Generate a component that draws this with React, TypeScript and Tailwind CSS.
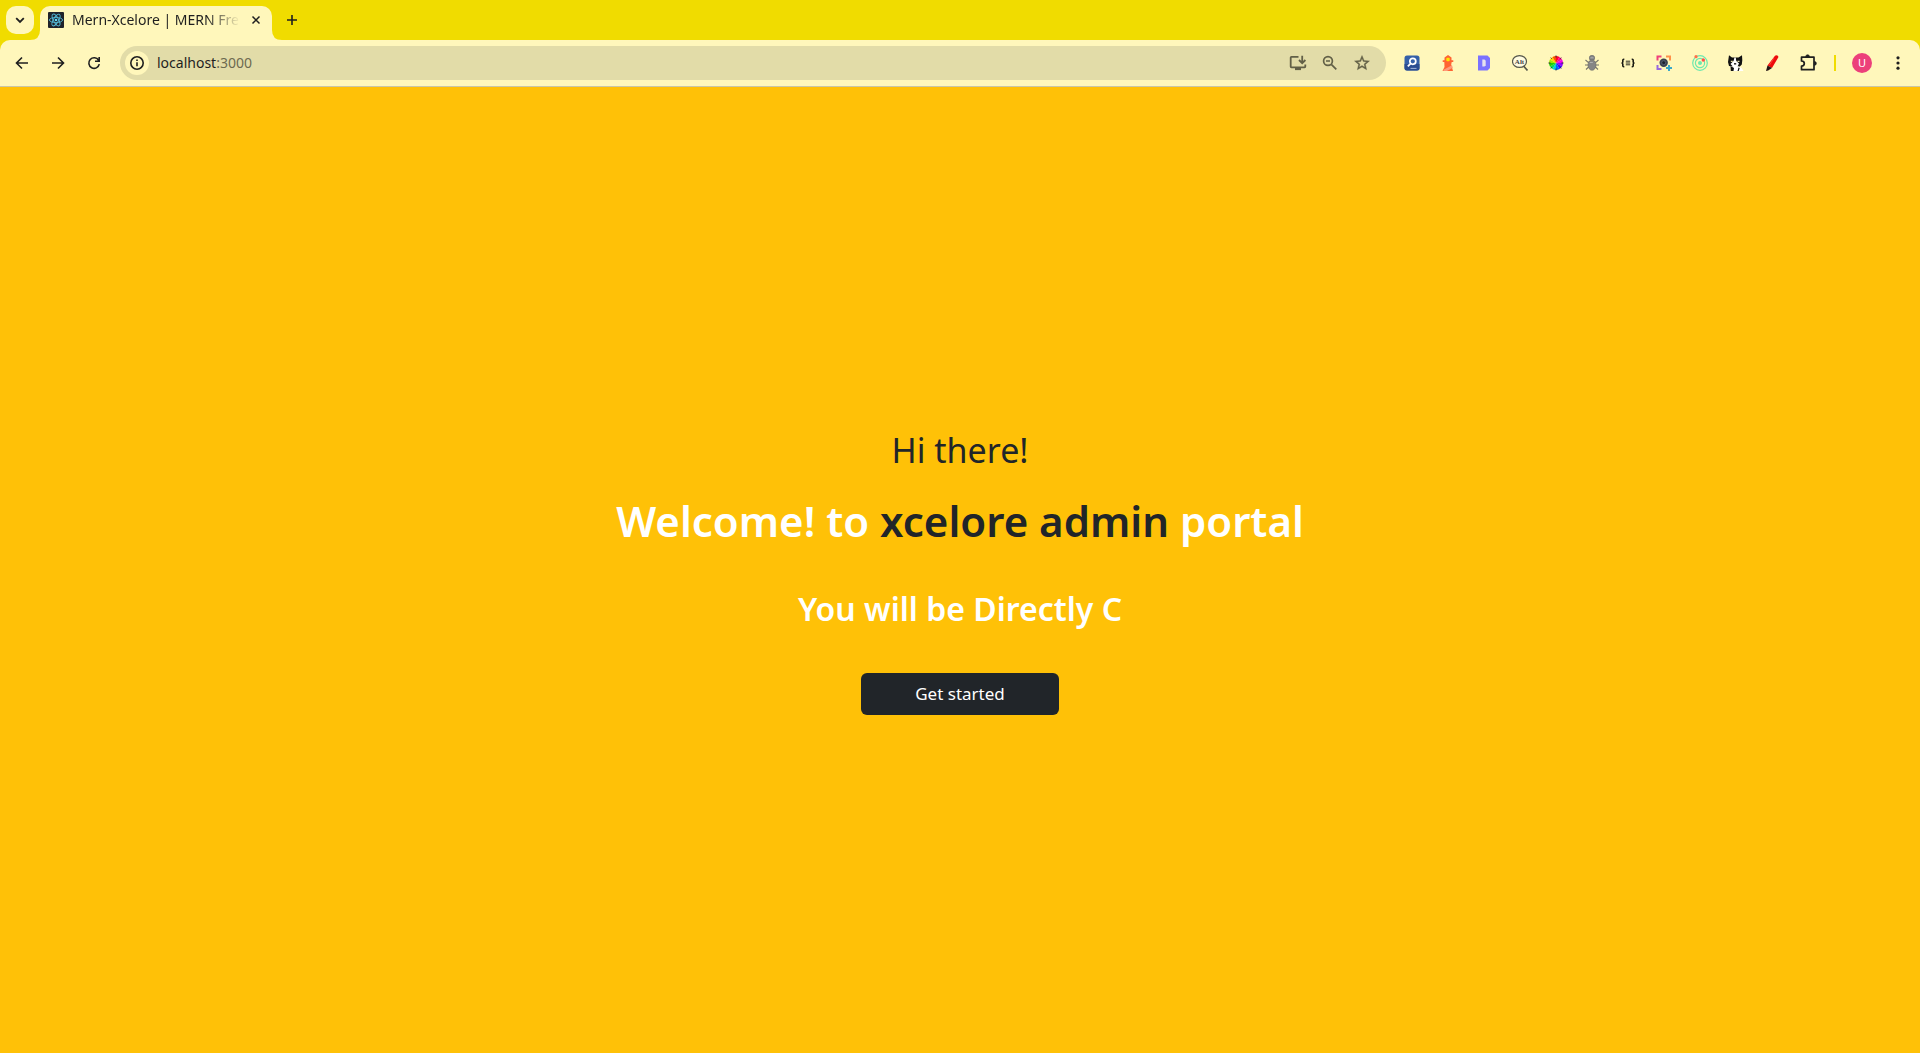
import type { ReactNode } from "react";

function IconButton({ label, children }: { label: string; children: ReactNode }) {
  return (
    <button type="button" aria-label={label} className="flex h-7 w-7 shrink-0 items-center justify-center rounded-full">
      {children}
    </button>
  );
}

function Stroke({ d, size = 16, width = 2 }: { d: string; size?: number; width?: number }) {
  return (
    <svg width={size} height={size} viewBox="0 0 16 16" fill="none" stroke="currentColor" strokeWidth={width}>
      <path d={d} />
    </svg>
  );
}

function ReactFavicon() {
  return (
    <svg className="shrink-0" width="16" height="16" viewBox="0 0 16 16">
      <rect width="16" height="16" rx="1" fill="#20232a" />
      <g fill="none" stroke="#53b9d6" strokeWidth="0.9">
        <ellipse cx="8" cy="8" rx="6.6" ry="2.6" />
        <ellipse cx="8" cy="8" rx="6.6" ry="2.6" transform="rotate(60 8 8)" />
        <ellipse cx="8" cy="8" rx="6.6" ry="2.6" transform="rotate(120 8 8)" />
      </g>
      <circle cx="8" cy="8" r="1.3" fill="#61dafb" />
    </svg>
  );
}

function InstallIcon() {
  return (
    <svg width="18" height="16" viewBox="0 0 18 16" fill="none" stroke="currentColor" strokeWidth="1.8">
      <path d="M9.5 1.9H2.4q-.7 0-.7.7v9q0 .7.7.7h13.2q.7 0 .7-.7V9.5" />
      <path d="M6 13.9h6" strokeWidth="2.4" />
      <path d="M13.2.8v7M10 5l3.2 3.2L16.4 5" />
    </svg>
  );
}

function ZoomOutIcon() {
  return (
    <svg width="16" height="16" viewBox="0 0 16 16" fill="none" stroke="currentColor" strokeWidth="1.7">
      <circle cx="6" cy="6" r="4.4" />
      <path d="M4 6h4M9.3 9.3l5 5" />
    </svg>
  );
}

function StarIcon() {
  return (
    <svg width="18" height="18" viewBox="0 0 24 24" fill="currentColor" stroke="currentColor" strokeWidth="0.5">
      <path d="m22 9.24-7.19-.62L12 2 9.19 8.63 2 9.24l5.46 4.73L5.82 21 12 17.27 18.18 21l-1.63-7.03zM12 15.4l-3.76 2.27 1-4.28-3.32-2.88 4.38-.38L12 6.1l1.71 4.04 4.38.38-3.32 2.88 1 4.28z" />
    </svg>
  );
}

function SearchTile() {
  return (
    <svg width="16" height="16" viewBox="0 0 16 16">
      <rect x="0.5" y="0.5" width="15" height="15" rx="2.5" fill="#3560a8" />
      <path d="M.5 9v4q0 2.5 2.5 2.5h10q2.5 0 2.5-2.5V9z" fill="#2a4c90" />
      <circle cx="8.8" cy="6.3" r="3" fill="none" stroke="#fff" strokeWidth="1.7" />
      <path d="M6.6 8.6 3.8 11.3" stroke="#fff" strokeWidth="1.8" />
      <path d="M6.5 13.4h6" stroke="#9fb2d8" strokeWidth="1" />
    </svg>
  );
}

function Lighthouse() {
  return (
    <svg width="16" height="16" viewBox="0 0 16 16">
      <path d="M8 0 11.5 2.5v2.7h1.8V7h-1.6L11.200 9.5l1.800 6.500H2.5l2-4-.2-5H2.700V5.200h1.800V2.500z" fill="#ff6433" />
      <rect x="6.3" y="2.8" width="3.4" height="3.4" rx="1" fill="#ffe500" />
      <path d="m4 14.500 8-4.300.8 2.600L7 16H3.300z" fill="#ff9a7a" />
    </svg>
  );
}

function DIcon() {
  return (
    <svg width="16" height="16" viewBox="0 0 16 16">
      <path d="M2 .5h9.5L14 3v10l-2.5 2.5H2z" fill="#7b72ff" />
      <path d="M6.3 4.500h2.200l1.200 1.200v4.600l-1.200 1.200H6.300z" fill="#e6e1ee" />
    </svg>
  );
}

function AltIcon() {
  return (
    <svg width="16" height="16" viewBox="0 0 16 16">
      <ellipse cx="7.5" cy="6.5" rx="7" ry="5.9" fill="#fffbe0" stroke="#55564a" strokeWidth="1.2" />
      <path d="m11.5 11 4 4.5" stroke="#55564a" strokeWidth="1.7" />
      <text x="7.5" y="9" textAnchor="middle" fontSize="7" fontFamily="Liberation Serif" fontWeight="700" fill="#444">
        Alt
      </text>
    </svg>
  );
}

const wheelColors = [
  "#ff0030",
  "#ff0098",
  "#f000f0",
  "#9000ff",
  "#3000ff",
  "#0060ff",
  "#00c8e8",
  "#00d860",
  "#20d000",
  "#a0e800",
  "#ffd000",
  "#ff5000",
];

function wheelPoint(i: number) {
  const a = (i * Math.PI) / 6 - Math.PI / 2;
  return `${8 + 7 * Math.cos(a)} ${8 + 7 * Math.sin(a)}`;
}

function ColorWheel() {
  return (
    <svg width="16" height="16" viewBox="0 0 16 16">
      {wheelColors.map((fill, i) => (
        <path key={fill} d={`M8 8 ${wheelPoint(i)}A7 7 0 0 1 ${wheelPoint(i + 1)}z`} fill={fill} />
      ))}
      <path d="M8 .5v2M8 13.5v2M.5 8h2M13.5 8h2M2.700 2.700l1 1M13.300 2.700l-1 1M2.700 13.300l1-1M13.300 13.300l-1-1" stroke="#333" strokeWidth="1" />
    </svg>
  );
}

function BugIcon() {
  return (
    <svg width="16" height="16" viewBox="0 0 16 16">
      <path d="M1.500 5 4 7.200h8L14.500 5M1 10h14M2 14.500 4.500 12h7l2.500 2.500" fill="none" stroke="#77756a" strokeWidth="1.1" />
      <circle cx="8" cy="3" r="2.7" fill="#858585" stroke="#686868" strokeWidth="0.6" />
      <ellipse cx="8" cy="10" rx="4" ry="5.3" fill="#858585" stroke="#686868" strokeWidth="0.6" />
      <path d="M6.500 2.800h3M5.800 7.500h3" stroke="#b0b0b0" strokeWidth="1" />
    </svg>
  );
}

function BracesIcon() {
  return (
    <svg width="16" height="16" viewBox="0 0 16 16" fill="none" stroke="#1b1b12" strokeWidth="1.6">
      <path d="M4.300 4.300h-.5q-1 0-1 1V7q0 1-1.300 1 1.300 0 1.300 1v1.700q0 1 1 1h.5M11.700 4.300h.5q1 0 1 1V7q0 1 1.300 1-1.300 0-1.300 1v1.700q0 1-1 1h-.5" />
      <path d="M5.800 6.200h4.400M5.800 8h4.400M5.800 9.800h4.400" strokeWidth="0.9" />
    </svg>
  );
}

function CaptureIcon() {
  return (
    <svg width="16" height="16" viewBox="0 0 16 16" fill="none" strokeWidth="2">
      <path d="M1.500 5.500v-4h4" stroke="#f0407a" />
      <path d="M10 1.500h4v4" stroke="#ff9048" />
      <path d="M1.500 10v4h4" stroke="#9868e0" />
      <path d="M13 10v6M10 13h6" stroke="#3aa8c8" />
      <circle cx="7.7" cy="7.7" r="4.2" fill="#394150" />
      <circle cx="7.7" cy="7.7" r="2" fill="#1d232e" stroke="#647087" strokeWidth="0.7" />
    </svg>
  );
}

function RadarIcon() {
  return (
    <svg width="16" height="16" viewBox="0 0 16 16" fill="none" stroke="#6de8ae" strokeWidth="1.2">
      <circle cx="8" cy="8" r="7.3" />
      <circle cx="8" cy="8" r="4.6" />
      <circle cx="8" cy="8" r="2" fill="#6de8ae" stroke="none" />
      <circle cx="4" cy="1.7" r="1.6" fill="#ff7048" stroke="none" />
      <circle cx="11.3" cy="5" r="1.7" fill="#ff5048" stroke="none" />
    </svg>
  );
}

function CatIcon() {
  return (
    <svg width="16" height="16" viewBox="0 0 16 16">
      <path d="M1 .3 4 2.500h6.500L14 .3l.300 5-.5 4.200-2 2H4.500L1 11 0 7z" fill="#111" />
      <path d="M6.500 2.500h1.200L8.300 6l2.700 2.500-1.500 3H5L2.500 9l3-3zM2.500 11.500h8l3 1.500L15.500 16H3z" fill="#fff" />
      <path d="M2.500 11 6 13l-.5 3H2.800zM10.500 12.500l-1 3.500h1.200l1-3z" fill="#111" />
      <path d="M2.800 5.800h2V7h-2zM9.500 5.800h2V7h-2z" fill="#e8e5ae" />
      <path d="M6 8h2.200v1.600H6z" fill="#333" />
    </svg>
  );
}

function MarkerIcon() {
  return (
    <svg width="16" height="16" viewBox="0 0 16 16">
      <path d="M11 .8q1-1 2.300-.2 1.500.8.900 2L8 13l-4.500-2.500z" fill="#ee0b0b" />
      <path d="M3.500 10.500 8 13l-3.800 2.500-2.200.5z" fill="#251414" />
      <path d="m10 3-4.500 7" stroke="#ff4b42" strokeWidth="0.8" />
    </svg>
  );
}

function PuzzleIcon() {
  return (
    <svg width="18" height="18" viewBox="0 0 18 18" fill="none" stroke="#1f1f1f" strokeWidth="1.7" strokeLinejoin="round">
      <path d="M2.500 3.200H15v12.500H2.500V12q2.800 0 2.800-2.500T2.500 7z" />
      <path d="M6.800 3V2.300a1.800 1.600 0 0 1 3.600 0V3zM15.300 7.600h.5a1.600 1.800 0 0 1 0 3.600h-.5z" fill="#1f1f1f" strokeWidth="0.6" />
    </svg>
  );
}

const extensions: { label: string; icon: ReactNode }[] = [
  { label: "Page search", icon: <SearchTile /> },
  { label: "Lighthouse", icon: <Lighthouse /> },
  { label: "Dictionary", icon: <DIcon /> },
  { label: "Alt text viewer", icon: <AltIcon /> },
  { label: "Color picker", icon: <ColorWheel /> },
  { label: "Bug tracker", icon: <BugIcon /> },
  { label: "JSON viewer", icon: <BracesIcon /> },
  { label: "Screen capture", icon: <CaptureIcon /> },
  { label: "Radar", icon: <RadarIcon /> },
  { label: "Cat", icon: <CatIcon /> },
  { label: "Marker", icon: <MarkerIcon /> },
  { label: "Extensions", icon: <PuzzleIcon /> },
];

function TabStrip() {
  return (
    <div className="flex h-10 items-start bg-[#f0dc00] px-1.5 pt-1.5">
      <button type="button" aria-label="Search tabs" className="flex h-7 w-7 items-center justify-center rounded-[10px] bg-[#fff7bb]">
        <Stroke d="m4.200 6.200 3.800 3.800 3.800-3.800" width={1.8} />
      </button>
      <div className="relative ml-1.5 flex h-[34px] w-[232px] items-center rounded-t-[10px] bg-[#fff7bb] px-2 pb-1.5">
        <svg className="absolute -left-2.5 bottom-0" width="10" height="10" viewBox="0 0 10 10">
          <path d="M10 0v10H0Q10 10 10 0z" fill="#fff7bb" />
        </svg>
        <svg className="absolute -right-2.5 bottom-0" width="10" height="10" viewBox="0 0 10 10">
          <path d="M0 0v10h10Q0 10 0 0z" fill="#fff7bb" />
        </svg>
        <ReactFavicon />
        <span className="ml-2 min-w-0 flex-1 whitespace-nowrap text-[14px] leading-5 [mask-image:linear-gradient(to_right,black_80%,transparent)]">
          Mern-Xcelore | MERN Fre
        </span>
        <button type="button" aria-label="Close tab" className="ml-2 flex h-4 w-4 shrink-0 items-center justify-center">
          <Stroke d="m4.500 4.500 7 7m0-7-7 7" width={1.5} />
        </button>
      </div>
      <button type="button" aria-label="New tab" className="ml-1.5 flex h-7 w-7 items-center justify-center rounded-full">
        <Stroke d="M8 3v10M3 8h10" width={1.6} />
      </button>
    </div>
  );
}

function Toolbar() {
  return (
    <div className="bg-[#f0dc00]">
      <div className="flex h-[46px] items-center rounded-t-[10px] bg-[#fff7bb] px-2">
        <nav aria-label="History" className="flex gap-2">
          <IconButton label="Back">
            <Stroke d="M14 8H3M8 2.500 2.500 8 8 13.500" width={1.6} />
          </IconButton>
          <IconButton label="Forward">
            <Stroke d="M2 8h11M8 2.500 13.500 8 8 13.500" width={1.6} />
          </IconButton>
          <IconButton label="Reload">
            <Stroke d="M12.600 5.200A5.300 5.300 0 1 0 13.300 9.200M13.200 2v4.200H9" width={1.6} />
          </IconButton>
        </nav>
        <div className="ml-3 flex h-[34px] min-w-0 flex-1 items-center rounded-full bg-[#e2dca8] pl-[5px] pr-2.5">
          <button type="button" aria-label="View site information" className="flex h-6 w-6 shrink-0 items-center justify-center rounded-full bg-[#fff7bb]">
            <svg width="16" height="16" viewBox="0 0 16 16" fill="none" stroke="#1f1f1f" strokeWidth="1.6">
              <circle cx="8" cy="8" r="6.2" />
              <path d="M8 7.200v4M8 4.400v1.600" />
            </svg>
          </button>
          <div className="ml-2 min-w-0 flex-1 text-[14px] leading-5">
            localhost<span className="text-[#6d6a50]">:3000</span>
          </div>
          <div className="flex gap-1 text-[#626047]">
            <IconButton label="Install app">
              <InstallIcon />
            </IconButton>
            <IconButton label="Zoom">
              <ZoomOutIcon />
            </IconButton>
            <IconButton label="Bookmark this tab">
              <StarIcon />
            </IconButton>
          </div>
        </div>
        <div className="ml-3 flex gap-2">
          {extensions.map((e) => (
            <IconButton key={e.label} label={e.label}>
              {e.icon}
            </IconButton>
          ))}
        </div>
        <div className="ml-3 h-4 w-0.5 bg-[#f0dc00]" />
        <div className="ml-3 flex gap-2">
          <IconButton label="Profile">
            <span className="flex h-5 w-5 items-center justify-center rounded-full bg-[#ec407a] text-[11px] leading-5 text-white">U</span>
          </IconButton>
          <IconButton label="Menu">
            <svg width="16" height="16" viewBox="0 0 16 16" fill="#1f1f1f">
              <circle cx="8" cy="2.8" r="1.6" />
              <circle cx="8" cy="8" r="1.6" />
              <circle cx="8" cy="13.2" r="1.6" />
            </svg>
          </IconButton>
        </div>
      </div>
    </div>
  );
}

export default function App() {
  return (
    <div className="flex min-h-screen flex-col bg-[#ffc107] font-['Noto_Sans','Open_Sans',sans-serif] text-[#1f1f1f]">
      <header>
        <TabStrip />
        <Toolbar />
      </header>
      <main className="flex flex-1 flex-col items-center justify-center border-t border-[#c9c6a8] pb-0.5 text-center text-[#212529]">
        <p className="text-[34px] leading-[54px]">Hi there!</p>
        <h1 className="mt-4 text-[42px] font-semibold leading-[56px] text-white">
          Welcome! to <span className="text-[#212529]">xcelore admin</span> portal
        </h1>
        <h2 className="mt-10 text-[32px] font-semibold leading-10 text-white">You will be Directly C</h2>
        <button type="button" className="mt-11 h-[42px] w-[198px] rounded-md bg-[#212529] text-[17px] text-white">
          Get started
        </button>
      </main>
    </div>
  );
}
